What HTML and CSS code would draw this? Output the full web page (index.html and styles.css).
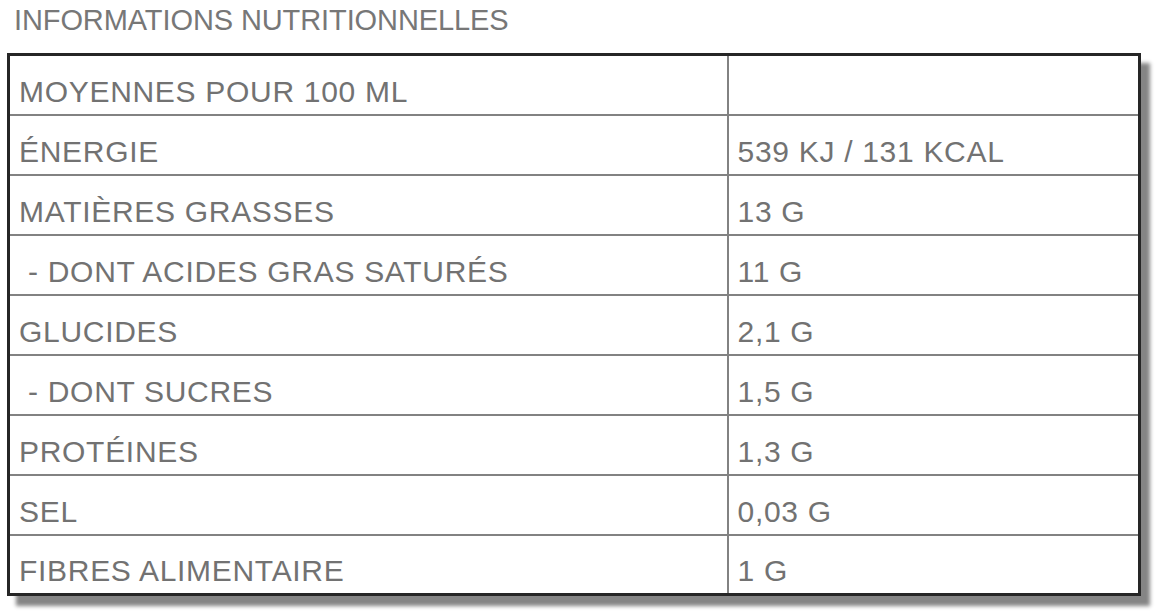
FILE: index.html
```html
<!DOCTYPE html>
<html lang="fr">
<head>
<meta charset="utf-8">
<title>Informations nutritionnelles</title>
<link rel="stylesheet" href="styles.css">
</head>
<body>
<h2 class="title">INFORMATIONS NUTRITIONNELLES</h2>
<table class="nutri">
  <colgroup><col class="c-label"><col class="c-value"></colgroup>
  <tbody>
    <tr><td>MOYENNES POUR 100 ML</td><td></td></tr>
    <tr><td>ÉNERGIE</td><td>539 KJ / 131 KCAL</td></tr>
    <tr><td>MATIÈRES GRASSES</td><td>13 G</td></tr>
    <tr><td class="sub">- DONT ACIDES GRAS SATURÉS</td><td>11 G</td></tr>
    <tr><td>GLUCIDES</td><td>2,1 G</td></tr>
    <tr><td class="sub">- DONT SUCRES</td><td>1,5 G</td></tr>
    <tr><td>PROTÉINES</td><td>1,3 G</td></tr>
    <tr><td>SEL</td><td>0,03 G</td></tr>
    <tr><td>FIBRES ALIMENTAIRE</td><td>1 G</td></tr>
  </tbody>
</table>
</body>
</html>
```
FILE: styles.css
```css
html, body {
  margin: 0;
  padding: 0;
  background: #ffffff;
}
body {
  font-family: "Liberation Sans", Arial, Helvetica, sans-serif;
  color: #727272;
  min-height: 616px;
  box-sizing: border-box;
  padding-bottom: 20px;
}
.title {
  margin: 4px 0 0 14px;
  font-size: 29px;
  line-height: 32px;
  font-weight: normal;
  letter-spacing: -0.1px;
  color: #777777;
}
.nutri {
  margin: 17px 0 0 7px;
  width: 1134px;
  table-layout: fixed;
  border-collapse: collapse;
  border: 3px solid #262626;
  box-shadow: 9px 10px 4px #858585;
  background: #ffffff;
}
.c-label { width: 719px; }
.nutri td {
  height: 60px;
  box-sizing: border-box;
  border: 2px solid #828282;
  vertical-align: bottom;
  padding: 0 0 6px 9px;
  font-size: 30px;
  line-height: 32px;
  letter-spacing: 0.7px;
  white-space: nowrap;
}
.nutri td.sub {
  padding-left: 18px;
}
```
